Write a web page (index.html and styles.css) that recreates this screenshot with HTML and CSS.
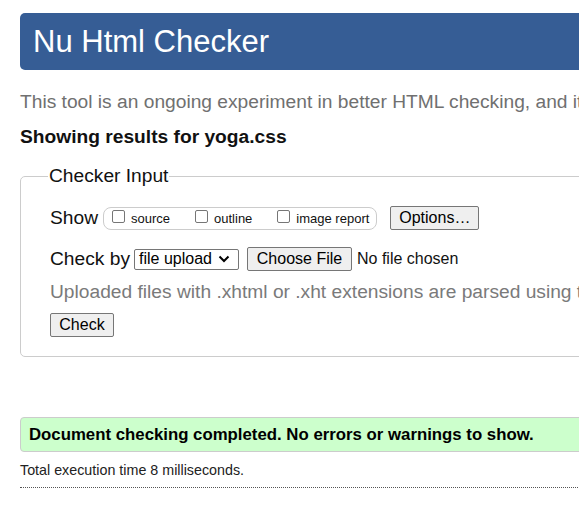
FILE: index.html
```html
<!DOCTYPE html>
<html lang="en">
<head>
<meta charset="utf-8">
<title>Showing results for yoga.css - Nu Html Checker</title>
<link rel="stylesheet" href="styles.css">
</head>
<body>
<div class="page">
  <h1 class="banner"><span>Nu Html Checker</span></h1>
  <p class="intro">This tool is an ongoing experiment in better HTML checking, and its behavior remains subject to change</p>
  <p class="showing">Showing results for yoga.css</p>
  <fieldset class="checker">
    <legend>Checker Input</legend>
    <div class="row show-row">
      <span class="lbl">Show</span>
      <span class="opts">
        <label class="opt"><span class="cb"></span>source</label>
        <label class="opt"><span class="cb"></span>outline</label>
        <label class="opt"><span class="cb"></span>image report</label>
      </span>
      <span class="btn btn-options">Options…</span>
    </div>
    <div class="row by-row">
      <span class="lbl">Check by</span>
      <span class="select">file upload
        <svg class="chev" width="12" height="8" viewBox="0 0 12 8"><path d="M1.5 1.5 L6 6 L10.5 1.5" fill="none" stroke="#000" stroke-width="2"/></svg>
      </span>
      <span class="btn btn-file">Choose File</span>
      <span class="nofile">No file chosen</span>
    </div>
    <p class="hint">Uploaded files with .xhtml or .xht extensions are parsed using the XML parser.</p>
    <span class="btn btn-check">Check</span>
  </fieldset>
  <p class="success">Document checking completed. No errors or warnings to show.</p>
  <p class="time">Total execution time 8 milliseconds.</p>
  <hr class="dots">
</div>
</body>
</html>
```
FILE: styles.css
```css
html {
  overflow: hidden;
  background: #fff;
}
body {
  margin: 0;
  font-family: "Liberation Sans", Arial, sans-serif;
  color: #111;
}
.page {
  width: 1100px;
  padding: 13px 0 0 20px;
}
.banner {
  margin: 0;
  height: 57px;
  background: #365d95;
  border-radius: 5px;
  color: #fff;
  font-weight: normal;
  font-size: 31px;
  line-height: 57px;
  padding-left: 13px;
  box-sizing: border-box;
}
.intro {
  margin: 21px 0 0;
  font-size: 19.2px;
  line-height: 22px;
  color: #707070;
  white-space: nowrap;
}
.showing {
  margin: 13px 0 0;
  font-size: 19.2px;
  line-height: 22px;
  font-weight: bold;
  color: #111;
}
.checker {
  margin: 17px 0 0;
  border: 1px solid #ccc;
  border-radius: 5px;
  padding: 8px 29px 19px 29px;
  min-width: 0;
}
.checker legend {
  font-size: 19.2px;
  line-height: 22px;
  padding: 0 1px;
  margin-left: -2px;
  color: #111;
}
.row {
  display: flex;
  align-items: center;
}
.lbl {
  font-size: 19.2px;
  color: #111;
}
.show-row {
  margin-top: 11px;
  height: 24px;
}
.opts {
  display: inline-flex;
  align-items: center;
  gap: 25px;
  margin-left: 5px;
  height: 21px;
  border: 1px solid #ccc;
  border-radius: 8px;
  padding: 0 7px 0 8px;
  font-size: 13px;
}
.opt {
  display: inline-flex;
  align-items: center;
  gap: 6px;
  color: #111;
}
.cb {
  display: inline-block;
  width: 11px;
  height: 11px;
  border: 1px solid #767676;
  border-radius: 2px;
  position: relative;
  top: -2px;
}
.btn {
  display: inline-flex;
  align-items: center;
  justify-content: center;
  box-sizing: border-box;
  background: #efefef;
  border: 1px solid #767676;
  border-radius: 2px;
  font-size: 16px;
  color: #000;
}
.btn-options {
  margin-left: 13px;
  width: 89px;
  height: 24px;
}
.by-row {
  margin-top: 17px;
  height: 24px;
}
.select {
  display: inline-flex;
  align-items: center;
  box-sizing: border-box;
  margin-left: 4px;
  width: 105px;
  height: 21px;
  border: 1px solid #767676;
  border-radius: 2px;
  font-size: 16px;
  padding-left: 4px;
  color: #000;
  gap: 6px;
}
.chev {
  display: block;
}
.btn-file {
  margin-left: 8px;
  width: 105px;
  height: 24px;
}
.nofile {
  margin-left: 5px;
  font-size: 16px;
  color: #111;
}
.hint {
  margin: 10px 0 0;
  font-size: 19.2px;
  line-height: 22px;
  color: #7a7a7a;
  white-space: nowrap;
}
.btn-check {
  margin-top: 10px;
  width: 64px;
  height: 24px;
}
.success {
  margin: 60px 0 0;
  height: 35px;
  box-sizing: border-box;
  background: #ccffcc;
  border: 1px solid #ccc;
  border-radius: 4px;
  padding-left: 8px;
  font-size: 16.8px;
  font-weight: bold;
  line-height: 33px;
  color: #000;
}
.time {
  margin: 10px 0 0;
  font-size: 14.3px;
  line-height: 16px;
  color: #222;
}
.dots {
  margin: 9px 0 0;
  border: 0;
  border-top: 1px dotted #555;
  height: 0;
}
```
